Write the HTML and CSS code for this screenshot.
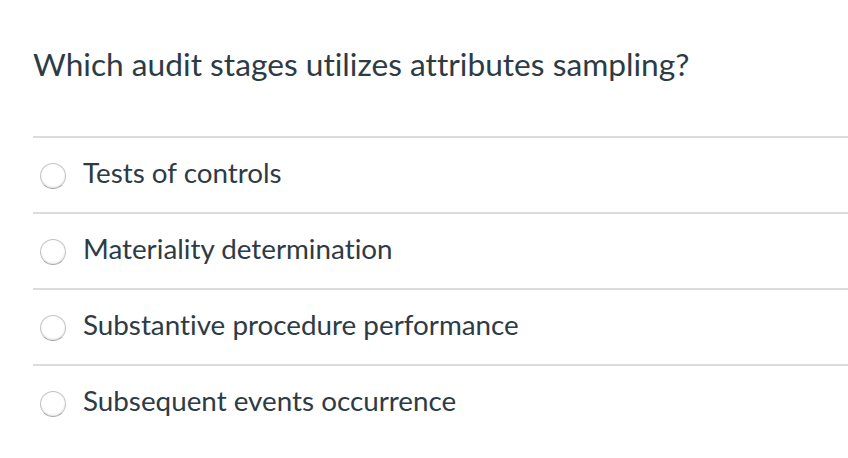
FILE: index.html
```html
<!DOCTYPE html>
<html>
<head>
<meta charset="utf-8">
<link rel="stylesheet" href="styles.css">
</head>
<body>
<div class="quiz">
  <h1 class="question">Which audit stages utilizes attributes sampling?</h1>
  <div class="answers">
    <label class="answer"><span class="radio"></span><span class="label">Tests of controls</span></label>
    <label class="answer"><span class="radio"></span><span class="label">Materiality determination</span></label>
    <label class="answer"><span class="radio"></span><span class="label">Substantive procedure performance</span></label>
    <label class="answer"><span class="radio"></span><span class="label">Subsequent events occurrence</span></label>
  </div>
</div>
</body>
</html>
```
FILE: styles.css
```css
html, body {
  margin: 0;
  padding: 0;
  background: #ffffff;
}
body {
  font-family: Lato, "Noto Sans", sans-serif;
  color: #2d3b45;
  font-variant-ligatures: none;
}
.quiz {
  padding: 39px 0 0 33px;
}
.question {
  margin: 0;
  font-size: 31.7px;
  font-weight: 400;
  line-height: 50px;
  color: #2d3b45;
}
.answers {
  margin-top: 47px;
  border-top: 2px solid #dcdcdc;
}
.answer {
  display: flex;
  align-items: center;
  height: 74px;
  border-bottom: 2px solid #dcdcdc;
  font-size: 27.8px;
}
.answer:last-child {
  border-bottom: none;
}
.radio {
  box-sizing: border-box;
  width: 26px;
  height: 26px;
  margin-left: 7px;
  margin-right: 17px;
  margin-top: 2px;
  border-radius: 50%;
  border: 1px solid #c4c4c4;
  border-bottom-color: #a8a8a8;
  background: #ffffff;
  box-shadow: inset 0 -1px 2px rgba(0,0,0,0.12);
}
.label {
  color: #2d3b45;
  margin-bottom: 6px;
}
```
